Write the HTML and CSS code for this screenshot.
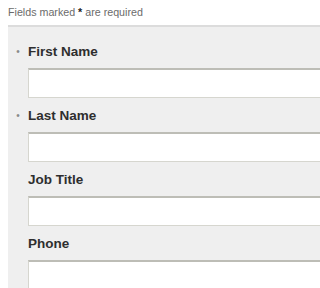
FILE: index.html
```html
<!DOCTYPE html>
<html>
<head>
<meta charset="utf-8">
<link rel="stylesheet" href="styles.css">
</head>
<body>
<p class="note">Fields marked <b>*</b> are required</p>
<form class="panel">
  <div class="field">
    <span class="marker">•</span>
    <label class="label">First Name</label>
    <input class="input" type="text">
  </div>
  <div class="field">
    <span class="marker">•</span>
    <label class="label">Last Name</label>
    <input class="input" type="text">
  </div>
  <div class="field">
    <span class="marker"></span>
    <label class="label">Job Title</label>
    <input class="input" type="text">
  </div>
  <div class="field">
    <span class="marker"></span>
    <label class="label">Phone</label>
    <input class="input" type="text">
  </div>
</form>
</body>
</html>
```
FILE: styles.css
```css
html, body {
  margin: 0;
  padding: 0;
  background: #ffffff;
  overflow: hidden;
}
body {
  font-family: "Liberation Sans", Arial, sans-serif;
}
.note {
  margin: 0;
  padding: 4px 8px 0;
  height: 25px;
  box-sizing: border-box;
  font-size: 10.7px;
  line-height: 16px;
  color: #6b6b6b;
}
.note b {
  color: #222;
}
.panel {
  margin: 0 0 0 8px;
  background: #efefef;
  border-top: 2px solid #dcdcdc;
  padding-top: 7px;
  display: flex;
  flex-direction: column;
  overflow: hidden;
}
.field {
  display: grid;
  grid-template-columns: 20px 1fr;
  grid-template-rows: 34px 30px;
}
.marker {
  grid-column: 1;
  grid-row: 1;
  display: flex;
  align-items: center;
  justify-content: center;
  color: #8a8a8a;
  font-size: 10px;
}
.label {
  grid-column: 2;
  grid-row: 1;
  display: flex;
  align-items: center;
  font-size: 13.5px;
  font-weight: bold;
  color: #2e2e2e;
}
.input {
  grid-column: 2;
  grid-row: 2;
  margin: 0;
  width: calc(100% + 10px);
  height: 30px;
  box-sizing: border-box;
  background: #ffffff;
  border: 1px solid #d6d6cf;
  border-top: 2px solid #bdbdb6;
  padding: 0;
}
```
